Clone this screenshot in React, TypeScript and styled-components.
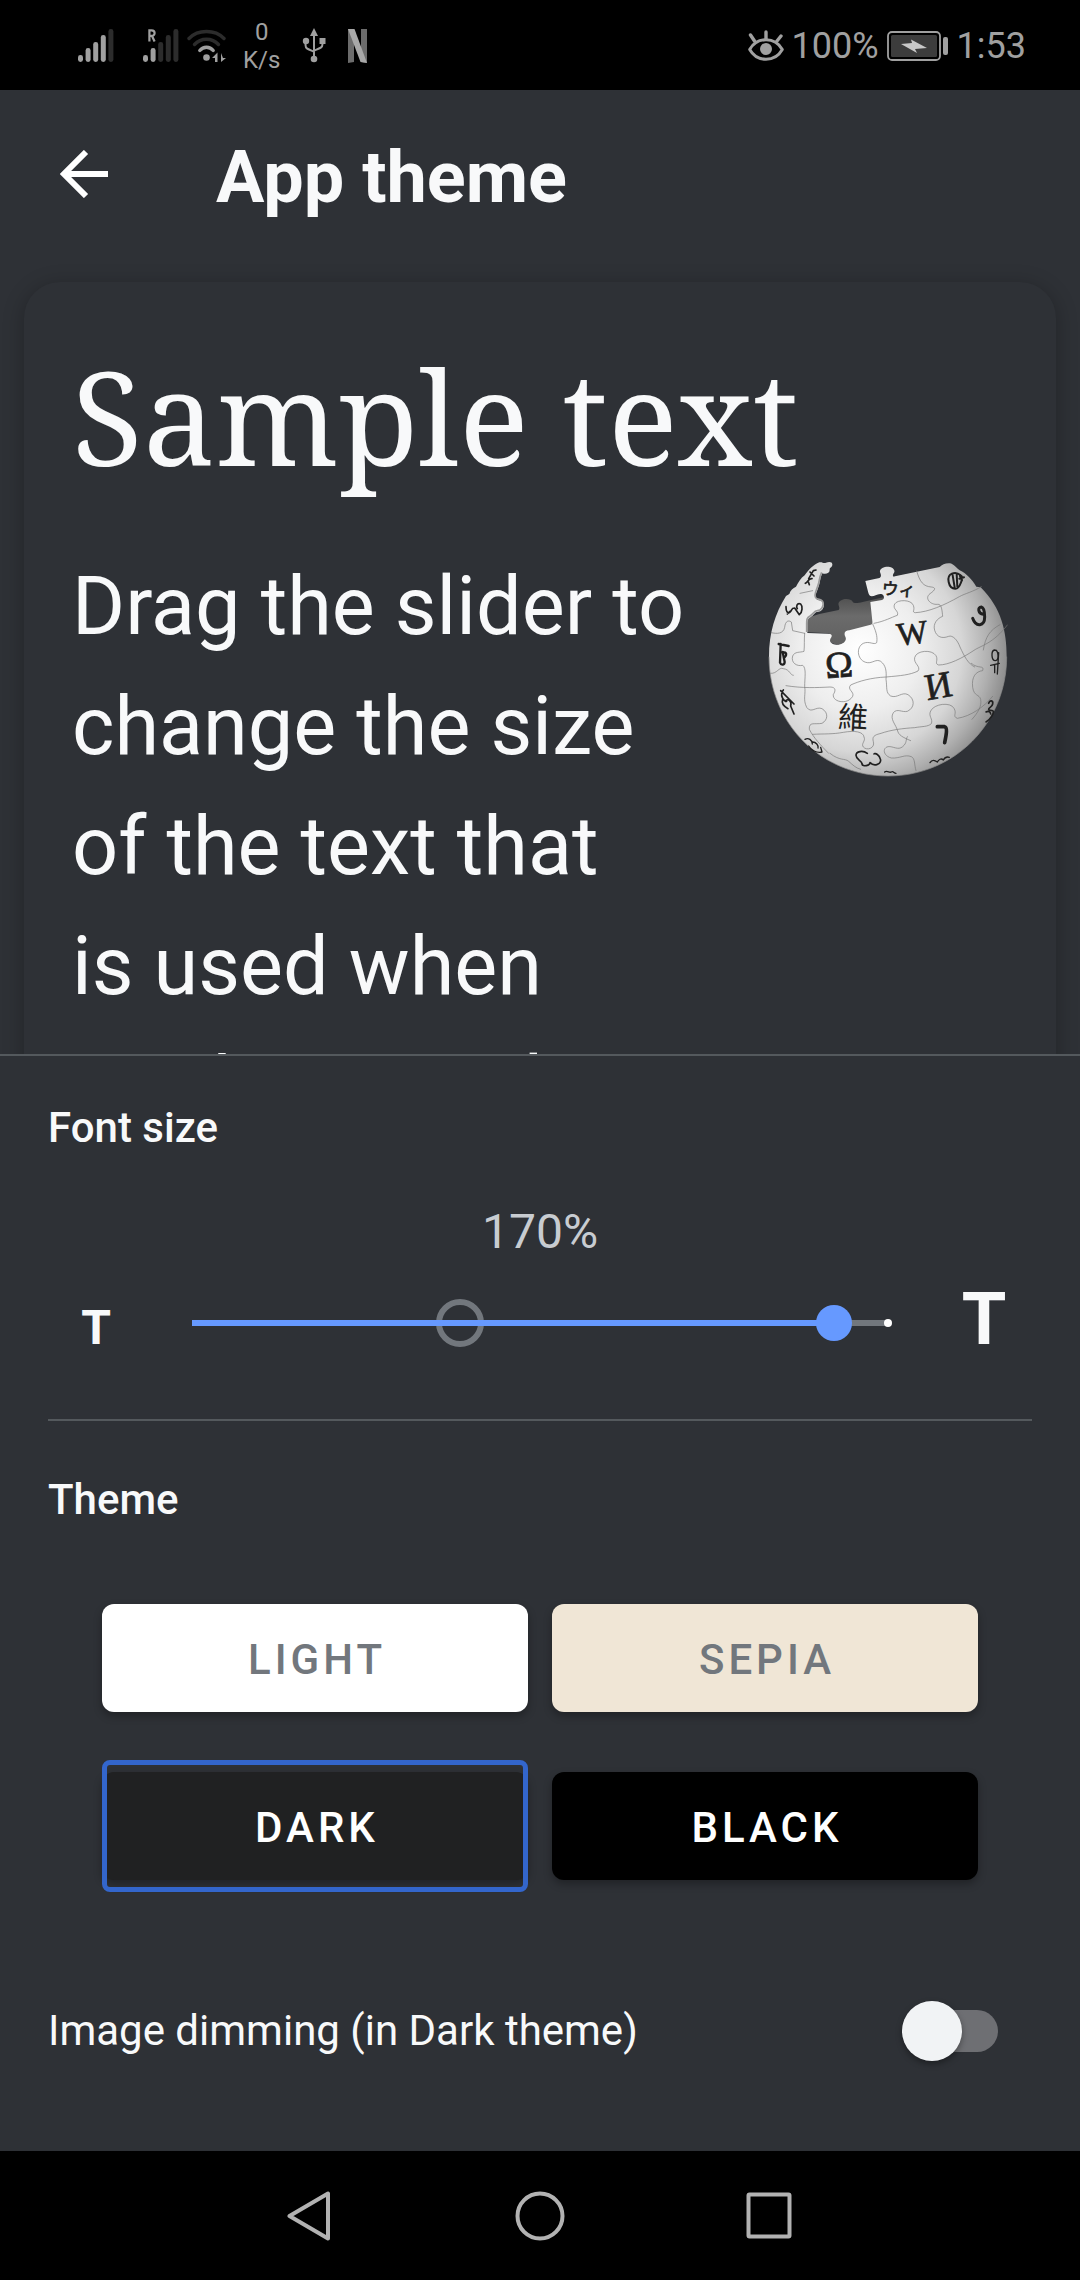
import React, { useState } from "react";
import styled, { createGlobalStyle } from "styled-components";

const GlobalStyle = createGlobalStyle`
  *, *::before, *::after { box-sizing: border-box; }
  body {
    margin: 0;
    background: #000;
    color: #f8f9fa;
    font-family: Roboto, "Liberation Sans", sans-serif;
  }
  h1, h2, p { margin: 0; }
  svg { display: block; flex: none; }
`;

const Screen = styled.div`
  display: flex;
  flex-direction: column;
  height: 100vh;
  background: #2e3136;
`;

/* ---------- Status bar ---------- */

const StatusBar = styled.div`
  display: flex;
  justify-content: space-between;
  align-items: center;
  flex: none;
  height: 90px;
  padding: 2px 54px 0 78px;
  background: #000;
  color: #a0a0a0;
`;

const StatusGroup = styled.div<{ $gap: number }>`
  display: flex;
  align-items: center;
  gap: ${(p) => p.$gap}px;
`;

const NetworkSpeed = styled.div`
  margin-left: 8px;
  font-size: 24px;
  line-height: 28px;
  text-align: center;
`;

const StatusText = styled.span`
  font-size: 36px;
  line-height: 48px;
`;

const Signal = ({ strength, roaming }: { strength: number; roaming?: boolean }) => (
  <svg width="36" height="34" viewBox="0 0 36 34" aria-hidden="true">
    {[26, 19, 13, 6, 0].map((top, i) => (
      <rect
        key={top}
        x={i * 7.6}
        y={top}
        width="5"
        height={33 - top}
        rx="2.4"
        fill={i < strength ? "#a0a0a0" : "#2c2c2c"}
      />
    ))}
    {roaming && (
      <path d="M6.4 12.5V1.3h2.2c4 0 4 5.6 0 5.6H6.4M9 7l2.600 5.500" fill="none" stroke="#a0a0a0" strokeWidth="2.2" />
    )}
  </svg>
);

const WifiIcon = () => (
  <svg width="40" height="34" viewBox="0 0 40 34" fill="none" strokeLinecap="round" strokeWidth="3.4" aria-hidden="true">
    <path d="M2 9.500C11 .2 28 .2 37 9.500" stroke="#2c2c2c" />
    <path d="M7.500 15.500c6.500-7 17.500-7 24 0" stroke="#2c2c2c" />
    <path d="M12.800 21.500c3.500-4.300 9.900-4.300 13.400 0" stroke="#a0a0a0" />
    <circle cx="19.500" cy="28.500" r="3.300" fill="#a0a0a0" />
    <path d="M30.500 23.500v9.500h-2.500v-4h-3zM34 24v9l5-4h-3z" fill="#a0a0a0" />
  </svg>
);

const UsbIcon = () => (
  <svg width="24" height="36" viewBox="0 0 24 36" aria-hidden="true">
    <path d="M12 8v22M3.500 14v3c0 4 3 4.500 8.500 6.500M20.500 14v2c0 4-3 4.500-8.500 6.500" fill="none" stroke="#a0a0a0" strokeWidth="2" />
    <path d="M12 0l4 8H8z" fill="#a0a0a0" />
    <circle cx="4" cy="13" r="3.200" fill="#a0a0a0" />
    <rect x="17.500" y="10" width="6" height="6" fill="#a0a0a0" />
    <circle cx="12" cy="31" r="3.300" fill="#a0a0a0" />
  </svg>
);

const StreamIcon = () => (
  <svg width="20" height="34" viewBox="0 0 20 34" aria-hidden="true">
    <path d="M0 0h6v33l-6 1zM13 0h6v34l-6-1z" fill="#6c6c6c" />
    <path d="M0 0h6.500L19 34l-6.500-1z" fill="#a8a8a8" />
  </svg>
);

const EyeIcon = () => (
  <svg width="36" height="32" viewBox="0 0 36 32" fill="none" stroke="#a0a0a0" strokeLinecap="round" aria-hidden="true">
    <path d="M1.700 19.500C9 6.500 27 6.500 34.300 19.500 27 32.500 9 32.500 1.700 19.500z" strokeWidth="3" strokeLinejoin="round" />
    <path d="M18 2v7M2.500 5l4 6M33 6l-4 5" strokeWidth="3.400" />
    <circle cx="18" cy="19" r="6" fill="#a0a0a0" stroke="none" />
  </svg>
);

const BatteryIcon = () => (
  <svg width="62" height="30" viewBox="0 0 62 30" aria-hidden="true">
    <rect x="1" y="1" width="52" height="28" rx="4" fill="none" stroke="#a0a0a0" strokeWidth="1.800" />
    <rect x="4" y="4" width="46" height="22" rx="1.500" fill="#3c3c3c" />
    <path d="M14 13l11-1-1-3.500 16 8.500-12 1 2 4z" fill="#c8c8c8" />
    <rect x="56" y="6" width="5" height="18" rx="2" fill="#a0a0a0" />
  </svg>
);

/* ---------- App bar ---------- */

const AppBar = styled.header`
  display: flex;
  align-items: center;
  flex: none;
  gap: 84px;
  height: 168px;
  padding: 0 36px;
`;

const IconButton = styled.button`
  display: grid;
  place-items: center;
  width: 96px;
  height: 96px;
  padding: 0;
  border: 0;
  background: none;
`;

const Title = styled.h1`
  padding-top: 8px;
  font-size: 72px;
  font-weight: 700;
  line-height: 84px;
`;

/* ---------- Preview ---------- */

const Preview = styled.main`
  flex: 1 1 0;
  min-height: 0;
  padding: 24px 24px 0;
  overflow: hidden;
`;

const Card = styled.article`
  padding: 48px;
  border-radius: 36px;
  background: #2e3136;
  box-shadow: 0 4px 20px 2px rgba(0, 0, 0, 0.22);
`;

const SampleHeading = styled.h2`
  font-family: "Noto Serif", "Droid Serif", "Source Serif Pro", "Liberation Serif", serif;
  font-size: 130px;
  font-weight: 400;
  line-height: 172px;
  white-space: nowrap;
`;

const SampleBody = styled.div`
  display: flex;
  justify-content: space-between;
  gap: 48px;
  margin-top: 45px;
`;

const SampleText = styled.p`
  flex: 1;
  font-size: 81px;
  line-height: 120px;
`;

const LogoFrame = styled.div`
  padding-top: 14px;
`;

const GlobeLogo = () => (
  <svg width="240" height="216" viewBox="54 63 720 648" role="img" aria-label="Wikipedia">
    <defs>
      <radialGradient id="sphere" gradientUnits="userSpaceOnUse" cx="330" cy="330" r="450">
        <stop offset="0" stopColor="#ffffff" />
        <stop offset="0.4" stopColor="#eeeeee" />
        <stop offset="0.68" stopColor="#d6d6d6" />
        <stop offset="0.86" stopColor="#b0b0b0" />
        <stop offset="1" stopColor="#8a8a8a" />
      </radialGradient>
      <linearGradient id="inner" x1="0" y1="0" x2="0" y2="1">
        <stop offset="0" stopColor="#505050" />
        <stop offset="0.4" stopColor="#6b6b6b" />
        <stop offset="1" stopColor="#606060" />
      </linearGradient>
    </defs>
    <path
      d="M168 235l40-13 58-12c8-8-8-17 4-27 12-10 34-7 38 2 4 7 16 4 30 1l62-14v90l-95 18-4 20c4 18-60 20-68-4l4-16-72-4z"
      fill="url(#inner)"
    />
    <path
      d="M57 350C57 280 75 220 108 168l10-6c3-12 11-18 20-22 8-14 14-26 26-34 12-17 26-32 44-39 8-2 13 4 20 1 10-4 20-3 19 7-1 8-9 7-8 15 0 10-12 14-22 10-8 16-6 28-12 42-4 14-12 24-6 34 4 7 20 3 22 14 3 12-6 25-17 25-10 0-12 10-22 16-10 5-10 12-10 24v24l62 2c12 0 14 6 8 14-8 14 10 20 24 19 14-2 26-12 20-24-6-12 0-18 12-19l64-17c4-1 6-5 5-10l-6-58 35-6c8-3 8-15-2-18-12-2-20 7-29 7-8 0-10-10-12-18l-7-28 39-8c9-2 9-9 6-16-6-12 10-20 25-19 13 1 22 12 15 20-4 8-3 11 4 9l134-28c8-8 22-14 36-10 10 5 16 14 24 20 20 9 38 28 50 49l13 2C755 205 770 275 770 350 770 550 612 708 414 708 214 708 57 550 57 350z"
      fill="url(#sphere)"
    />
    <path d="M57 350C57 550 214 708 414 708 612 708 770 550 770 350" fill="none" stroke="#8b8b8b" strokeWidth="3" opacity=".7" />
    <path d="M170 276v-24c0-12 0-19 10-24 10-6 12-16 22-16 11 0 20-13 17-25-2-11-18-7-22-14-6-10 2-20 6-34 6-14 4-26 12-42" fill="none" stroke="#9a9a9a" strokeWidth="5" />
    <g fill="none" stroke="#777" strokeOpacity=".65" strokeWidth="3" strokeLinecap="round">
      <path d="M368 252c14 30 14 44 12 56-8 8-22-6-40 2-24 12-18 54 12 58 16 2 26-12 40-4 16 12 18 30 16 54 4 24-2 40 14 50 20 8 34-14 52-4 22 14 20 40-2 50-16 4-30-10-42 4-12 20 8 34 14 58 4 12 24 20 38 26" />
      <path d="M108 437c50 8 92 6 132 4 20 0 16 14 10 22-4 24 44 32 58 6 6-14-18-20-6-34 26-12 62-22 106-24 44-4 72-6 96-18 10-14-14-22-10-40 4-22 52-26 64-6 8 14-6 24 8 28 30 0 70-20 106-44 20-14 58-20 100-76" />
      <path d="M372 250c32-6 52-18 70-24 6-14-16-18-8-34 8-14 50-14 56 4 6 16-6 20 6 22 40-2 86-22 132-48 18-10 40-14 66-30" />
      <path d="M500 93c10 34 20 46 44 48 18 2 8 12-4 20-18 14 2 34 22 32 14-2 14 20 16 36-16 6-30 22-24 42 6 20 22 26 42 18 12-4 26 10 34 32 14 30 24 50 44 60" />
      <path d="M164 280c-2 20 0 36-2 54-12 4-28 0-34 14-6 20 12 32 30 28 12 8 6 38 6 64 4 22-6 38 6 62 14 20 28-4 46 4 20 12 18 34 0 44-22 4-40-6-38 18 12 24 34 48 58 72" />
      <path d="M188 583c36-2 60 0 92-6 34-6 60-2 62 14 6 12-10 20-2 30 10 12 36 4 30-16-4-14 2-20 20-24 34-12 70-16 104-18 20-4 40-2 50-12 6-14-10-22-2-38 10-22 60-28 70-8 10 16-6 24 10 30 40-6 80-34 106-66" />
      <path d="M664 370c20 18 40 4 34 22-20 2-34 18-30 50 4 28 20 20 24 36 4 20-8 40-26 60M62 400c20 2 24-20 38-14 20 2 20 20 30 20M64 278c16 4 36 4 40-16 2-20 12-22 20-16l4 26 36 8M150 160l38-8" />
      <path d="M498 692c-6-20-2-36-14-42-20-8-34 6-60 4-24-6-28-30-10-34 16-2 30 12 44 0 14-12 8-20 14-30M240 640c30 24 44 14 56 24 12 10 20 20 36 24M700 330c6-40 20-60 50-76" />
    </g>
    <g fill="#202020" stroke="#202020" strokeWidth="2" fontFamily='"Liberation Serif", "DejaVu Serif", serif' textAnchor="middle">
      <text x="267" y="412" fontSize="112" transform="rotate(-4 267 375)">Ω</text>
      <text x="487" y="312" fontSize="98" transform="rotate(-7 487 280)">W</text>
      <text x="565" y="474" fontSize="112" transform="rotate(-10 565 438)">И</text>
      <text x="309" y="565" fontSize="90" fontFamily='"Noto Sans CJK TC", sans-serif' strokeWidth="0" transform="rotate(3 309 534)">維</text>
      <text x="446" y="166" fontSize="50" fontFamily='"Noto Sans CJK JP", sans-serif' transform="rotate(4 446 146)">ウィ</text>
    </g>
    <g fill="none" stroke="#202020" strokeWidth="8" strokeLinecap="round" strokeLinejoin="round">
      <path d="M562 560h22c8 2 6 20 0 48" strokeWidth="11" />
      <path d="M668 235c10 28 36 24 36-4 0-16-2-28-10-30-12 0-10 20 6 22" strokeWidth="9" />
      <path d="M734 330c12 0 14 30 2 32-12 0-14-30-2-32M722 376l26-6M734 374v24M746 338l-4 64" strokeWidth="4" />
      <path d="M86 312l30 6M92 312l-2 56c4 10 14 6 14-2l-6-30M98 338c14-4 12 10 6 14" strokeWidth="7" />
      <path d="M92 452l40 40M100 450c-12 14 0 34 10 34M106 484c8-12 20 0 16 14l10 24M98 478c-4 12 4 22 16 28" strokeWidth="5" />
      <path d="M108 200c0 14 4 22 12 16 8-6 2-12 14-12l14 20c10-8 10-26 4-32-12-4-14 8-10 14M120 214l-8 8" strokeWidth="5" />
      <path d="M166 130c8-4 10-16 20-14M174 122l4 12M176 116l14-24 8-2M180 96l12 12" strokeWidth="5" />
      <path d="M596 126c-6-26 20-34 36-20 10 4-2 40-16 40-12 0-18-10-20-20zM608 106l6 36M620 102l2 38M628 116l14-4M630 108l6 14" strokeWidth="6" />
      <path d="M716 490c4-12 14-8 12 2s-12 10-12 16 12 0 14 6-10 26-22 32M708 516c8-4 14 0 14 6" strokeWidth="5" />
      <path d="M165 598c10-6 22 2 22 14M188 606c10 0 18 10 16 18M176 618c6 12 24 22 40 18l-4-14" strokeWidth="4" />
      <path d="M352 640c-14-10-34-6-34 6 0 14 18 16 18 26 2 10 24 4 24-4 12 12 32 6 32-8-2-16-18-22-20-18" strokeWidth="5" />
      <path d="M540 668c6-10 14-8 22-2 4-8 12-12 18-6 6-10 12-10 18-8M404 696c8-6 14 4 20 0s8 4 14 4" strokeWidth="4" />
    </g>
  </svg>
);

/* ---------- Settings panel ---------- */

const Panel = styled.section`
  flex: none;
  padding: 48px 48px 72px;
  border-top: 2px solid #54595d;
  background: #2e3136;
`;

const SectionTitle = styled.h2`
  font-size: 42px;
  font-weight: 500;
  line-height: 48px;
`;

const SizeValue = styled.output`
  display: block;
  margin: 52px 0 24px;
  color: #c8ccd1;
  font-size: 48px;
  line-height: 56px;
  text-align: center;
`;

const SizeRow = styled.div`
  display: grid;
  grid-template-columns: 96px 1fr 96px;
  column-gap: 48px;
  align-items: baseline;
  min-height: 78px;
`;

const SizeStep = styled.button<{ $large?: boolean }>`
  padding: 0;
  border: 0;
  background: none;
  color: #f8f9fa;
  font-family: inherit;
  font-size: ${(p) => (p.$large ? 72 : 48)}px;
  font-weight: 700;
  line-height: ${(p) => (p.$large ? 72 : 48)}px;
`;

const Slider = styled.div`
  position: relative;
  align-self: center;
  height: 48px;
`;

const DefaultMark = styled.span`
  position: absolute;
  top: 0;
  width: 48px;
  height: 48px;
  margin-left: -24px;
  border: 6px solid #72777d;
  border-radius: 50%;
`;

const Track = styled.span`
  position: absolute;
  top: 21px;
  left: 0;
  right: 0;
  height: 6px;
  background: #72777d;

  &::after {
    content: "";
    position: absolute;
    top: -1px;
    right: -4px;
    width: 8px;
    height: 8px;
    border-radius: 50%;
    background: #fff;
  }
`;

const Fill = styled.span`
  position: absolute;
  inset: 0 auto 0 0;
  background: #6699ff;
`;

const Range = styled.input`
  position: absolute;
  top: 0;
  left: -18px;
  width: calc(100% + 36px);
  height: 48px;
  margin: 0;
  appearance: none;
  background: transparent;

  &::-webkit-slider-thumb {
    appearance: none;
    width: 36px;
    height: 36px;
    border-radius: 50%;
    background: #6699ff;
  }
`;

const Divider = styled.hr`
  height: 2px;
  margin: 57px 0 55px;
  border: 0;
  background: #54595d;
`;

const ThemeGrid = styled.div`
  display: grid;
  grid-template-columns: 1fr 1fr;
  gap: 36px 24px;
  margin-top: 68px;
  padding: 0 54px;
`;

const ThemeButton = styled.button<{ $selected: boolean }>`
  position: relative;
  padding: 12px 0;
  border: 0;
  background: none;
  font-family: inherit;

  &::after {
    content: "";
    display: ${(p) => (p.$selected ? "block" : "none")};
    position: absolute;
    inset: 0;
    border: 5px solid #3366cc;
    border-radius: 8px;
  }
`;

const ThemeFace = styled.span<{ $bg: string; $fg: string }>`
  display: block;
  padding: 32px 0 28px 4px;
  border-radius: 12px;
  background: ${(p) => p.$bg};
  color: ${(p) => p.$fg};
  box-shadow: 0 4px 8px rgba(0, 0, 0, 0.3);
  font-size: 42px;
  font-weight: 500;
  letter-spacing: 4px;
  line-height: 48px;
`;

const SwitchRow = styled.label`
  display: flex;
  align-items: center;
  justify-content: space-between;
  height: 96px;
  margin-top: 91px;
  padding-right: 34px;
  font-size: 42px;
  line-height: 48px;
`;

const Switch = styled.input`
  position: relative;
  width: 96px;
  height: 42px;
  margin: 0;
  border-radius: 21px;
  appearance: none;
  background: #6e6f73;

  &::before {
    content: "";
    position: absolute;
    top: -9px;
    left: 0;
    width: 60px;
    height: 60px;
    border-radius: 50%;
    background: #f1f3f5;
    box-shadow: 0 3px 6px rgba(0, 0, 0, 0.35);
  }

  &:checked::before {
    left: 36px;
  }
`;

/* ---------- System navigation ---------- */

const NavBar = styled.nav`
  display: flex;
  justify-content: center;
  flex: none;
  height: 129px;
  background: #000;
`;

const NavButton = styled.button`
  display: grid;
  place-items: center;
  width: 230px;
  padding: 0;
  border: 0;
  background: none;
`;

const NavIcon = ({ children }: { children: React.ReactNode }) => (
  <svg width="50" height="50" viewBox="0 0 50 50" fill="none" stroke="#b2b2b2" strokeWidth="4" strokeLinejoin="round" aria-hidden="true">
    {children}
  </svg>
);

const themes = [
  { name: "LIGHT", bg: "#ffffff", fg: "#72777d" },
  { name: "SEPIA", bg: "#f0e6d6", fg: "#72777d" },
  { name: "DARK", bg: "#202122", fg: "#ffffff" },
  { name: "BLACK", bg: "#000000", fg: "#ffffff" },
];

const MIN = -5;
const MAX = 8;
const toPercent = (value: number) => `${((value - MIN) / (MAX - MIN)) * 100}%`;

export default function App() {
  const [size, setSize] = useState(7);
  const [theme, setTheme] = useState("DARK");

  return (
    <Screen>
      <GlobalStyle />
      <StatusBar>
        <StatusGroup $gap={8}>
          <StatusGroup $gap={29}>
            <Signal strength={4} />
            <Signal strength={2} roaming />
          </StatusGroup>
          <WifiIcon />
          <StatusGroup $gap={22}>
            <NetworkSpeed>
              0<br />
              K/s
            </NetworkSpeed>
            <UsbIcon />
            <StreamIcon />
          </StatusGroup>
        </StatusGroup>
        <StatusGroup $gap={8}>
          <EyeIcon />
          <StatusText>100%</StatusText>
          <BatteryIcon />
          <StatusText>1:53</StatusText>
        </StatusGroup>
      </StatusBar>

      <AppBar>
        <IconButton aria-label="Back">
          <svg width="48" height="48" viewBox="0 0 48 48" fill="none" stroke="#fff" strokeWidth="6" aria-hidden="true">
            <path d="M48 24H5M26 2L4 24l22 22" />
          </svg>
        </IconButton>
        <Title>App theme</Title>
      </AppBar>

      <Preview>
        <Card>
          <SampleHeading>Sample text</SampleHeading>
          <SampleBody>
            <SampleText>
              Drag the slider to change the size
              <br />
              of the text that
              <br />
              is used when reading articles
            </SampleText>
            <LogoFrame>
              <GlobeLogo />
            </LogoFrame>
          </SampleBody>
        </Card>
      </Preview>

      <Panel>
        <SectionTitle id="font-size">Font size</SectionTitle>
        <SizeValue htmlFor="size">{`${100 + size * 10}%`}</SizeValue>
        <SizeRow>
          <SizeStep aria-label="T, smaller text" onClick={() => setSize(Math.max(MIN, size - 1))}>
            T
          </SizeStep>
          <Slider>
            <DefaultMark style={{ left: toPercent(0) }} />
            <Track>
              <Fill style={{ width: toPercent(size) }} />
            </Track>
            <Range
              id="size"
              type="range"
              min={MIN}
              max={MAX}
              value={size}
              aria-labelledby="font-size"
              onChange={(e) => setSize(Number(e.target.value))}
            />
          </Slider>
          <SizeStep $large aria-label="T, larger text" onClick={() => setSize(Math.min(MAX, size + 1))}>
            T
          </SizeStep>
        </SizeRow>
        <Divider />
        <SectionTitle>Theme</SectionTitle>
        <ThemeGrid>
          {themes.map((t) => (
            <ThemeButton
              key={t.name}
              $selected={t.name === theme}
              aria-pressed={t.name === theme}
              onClick={() => setTheme(t.name)}
            >
              <ThemeFace $bg={t.bg} $fg={t.fg}>
                {t.name}
              </ThemeFace>
            </ThemeButton>
          ))}
        </ThemeGrid>
        <SwitchRow>
          Image dimming (in Dark theme)
          <Switch type="checkbox" role="switch" />
        </SwitchRow>
      </Panel>

      <NavBar>
        <NavButton aria-label="Back">
          <NavIcon>
            <path d="M43 2.500v45L4.500 25z" />
          </NavIcon>
        </NavButton>
        <NavButton aria-label="Home">
          <NavIcon>
            <circle cx="25" cy="25" r="22.500" />
          </NavIcon>
        </NavButton>
        <NavButton aria-label="Recent apps">
          <NavIcon>
            <rect x="3.500" y="3.500" width="41" height="42" rx="1" />
          </NavIcon>
        </NavButton>
      </NavBar>
    </Screen>
  );
}
